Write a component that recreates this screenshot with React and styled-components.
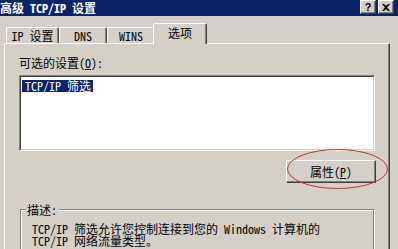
import React from "react";
import styled, { createGlobalStyle } from "styled-components";

const UI_FONT = `"Noto Sans Mono CJK SC", "Liberation Mono", "Noto Sans CJK SC", monospace`;

const GlobalStyles = createGlobalStyle`
  html, body {
    margin: 0;
    padding: 0;
    background: #d4d0c8;
  }

  *, *::before, *::after {
    box-sizing: border-box;
  }
`;

const Window = styled.div`
  position: relative;
  width: 398px;
  height: 249px;
  overflow: hidden;
  background: #d4d0c8;
  font-family: ${UI_FONT};
  font-size: 12px;
  color: #000;
`;

const TitleBar = styled.div`
  display: flex;
  align-items: flex-start;
  justify-content: space-between;
  height: 16px;
  background: #0a246a;
`;

const Title = styled.div`
  color: #fff;
  font-weight: bold;
  line-height: 15px;
  white-space: pre;
`;

const CaptionButtons = styled.div`
  display: flex;
  gap: 2px;
  margin-right: 4px;
`;

const CaptionButton = styled.div`
  display: flex;
  align-items: center;
  justify-content: center;
  width: 16px;
  height: 14px;
  background: #d4d0c8;
  border-top: 1px solid #fff;
  border-left: 1px solid #fff;
  border-right: 1px solid #404040;
  border-bottom: 1px solid #404040;
  box-shadow: inset -1px -1px 0 #808080;
  font-family: "Liberation Sans", sans-serif;
  font-weight: bold;
  font-size: 11px;
  line-height: 1;
`;

const Body = styled.div`
  padding: 0 8px 0 4px;
`;

const TabStrip = styled.div`
  display: flex;
  align-items: flex-end;
  height: 27px;
  padding-left: 2px;
  position: relative;
  z-index: 1;
`;

const Tab = styled.div`
  display: flex;
  align-items: center;
  justify-content: center;
  width: ${(p) => p.$width}px;
  height: ${(p) => (p.$active ? 21 : 16)}px;
  margin: ${(p) => (p.$active ? "0 -2px -1px -2px" : "0")};
  padding-bottom: ${(p) => (p.$active ? 3 : 0)}px;
  background: #d4d0c8;
  border-top: 1px solid #fff;
  border-left: 1px solid #fff;
  border-right: 1px solid #404040;
  border-top-left-radius: 2px;
  border-top-right-radius: 2px;
  box-shadow: inset -1px 0 0 #808080;
  white-space: pre;
  line-height: 12px;
`;

const TabPanel = styled.div`
  height: 220px;
  padding: 12px 13px 0 14px;
  border-top: 1px solid #fff;
  border-left: 1px solid #fff;
  border-right: 1px solid #404040;
  box-shadow: inset -1px 0 0 #808080;
`;

const FieldLabel = styled.div`
  line-height: 13px;
  white-space: pre;
`;

const ListBox = styled.div`
  width: 356px;
  height: 76px;
  margin-top: 6px;
  padding: 1px 2px;
  background: #fff;
  border-top: 1px solid #808080;
  border-left: 1px solid #808080;
  border-right: 1px solid #fff;
  border-bottom: 1px solid #fff;
  box-shadow: inset 1px 1px 0 #404040, inset -1px -1px 0 #d4d0c8;
`;

const ListItem = styled.div`
  display: inline-block;
  padding: 0 2px 0 3px;
  line-height: 12px;
  white-space: pre;
  background: ${(p) => (p.$selected ? "#0a246a" : "transparent")};
  color: ${(p) => (p.$selected ? "#fff" : "#000")};
`;

const ButtonRow = styled.div`
  display: flex;
  justify-content: flex-end;
  width: 357px;
  margin-top: 9px;
`;

const ButtonWrap = styled.div`
  position: relative;
`;

const PushButton = styled.div`
  display: flex;
  align-items: center;
  justify-content: center;
  width: 90px;
  height: 23px;
  background: #d4d0c8;
  border-top: 1px solid #fff;
  border-left: 1px solid #fff;
  border-right: 1px solid #404040;
  border-bottom: 1px solid #404040;
  box-shadow: inset -1px -1px 0 #808080;
  white-space: pre;
`;

const Mark = styled.svg`
  position: absolute;
  left: 1px;
  top: -11px;
  overflow: visible;
  pointer-events: none;
`;

const GroupBox = styled.div`
  position: relative;
  width: 354px;
  height: 60px;
  margin: 26px 0 0 1px;
  padding: 13px 10px 0 11px;
  border: 1px solid #808080;
  box-shadow: inset 1px 1px 0 #fff, 1px 1px 0 #fff;
`;

const Legend = styled.div`
  position: absolute;
  top: -7px;
  left: 5px;
  padding: 0 2px 0 1px;
  background: #d4d0c8;
  line-height: 13px;
`;

const Description = styled.div`
  line-height: 12px;
  white-space: pre;
`;

const CloseGlyph = () => (
  <svg width="8" height="7" viewBox="0 0 8 7">
    <path d="M0 0h2l2 2 2-2h2L5 3.5 8 7H6L4 5 2 7H0l3-3.5z" fill="#000" />
  </svg>
);

export default function App() {
  return (
    <>
      <GlobalStyles />
      <Window>
        <TitleBar>
          <Title>高级 TCP/IP 设置</Title>
          <CaptionButtons>
            <CaptionButton>?</CaptionButton>
            <CaptionButton>
              <CloseGlyph />
            </CaptionButton>
          </CaptionButtons>
        </TitleBar>

        <Body>
          <TabStrip>
            <Tab $width={53}>IP 设置</Tab>
            <Tab $width={48}>DNS</Tab>
            <Tab $width={48}>WINS</Tab>
            <Tab $width={54} $active>选项</Tab>
          </TabStrip>

          <TabPanel>
            <FieldLabel>
              可选的设置(<u>O</u>):
            </FieldLabel>
            <ListBox>
              <ListItem $selected>TCP/IP 筛选</ListItem>
            </ListBox>

            <ButtonRow>
              <ButtonWrap>
                <PushButton>
                  属性(<u>P</u>)
                </PushButton>
                <Mark width="101" height="40" viewBox="0 0 101 40">
                  <ellipse cx="50.5" cy="20" rx="50" ry="19.5" fill="none" stroke="#d42a2a" strokeWidth="1" />
                </Mark>
              </ButtonWrap>
            </ButtonRow>

            <GroupBox>
              <Legend>描述:</Legend>
              <Description>
                {"TCP/IP 筛选允许您控制连接到您的 Windows 计算机的\nTCP/IP 网络流量类型。"}
              </Description>
            </GroupBox>
          </TabPanel>
        </Body>
      </Window>
    </>
  );
}
